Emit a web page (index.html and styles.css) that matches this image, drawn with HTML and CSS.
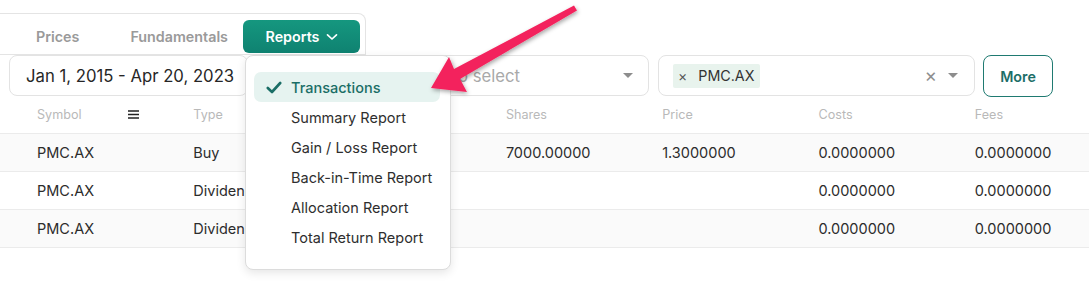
FILE: index.html
```html
<!DOCTYPE html>
<html>
<head>
<meta charset="utf-8">
<link rel="stylesheet" href="styles.css">
</head>
<body>
<div class="page">
  <div class="tabbar">
    <div class="tab tab-prices">Prices</div>
    <div class="tab tab-fund">Fundamentals</div>
    <div class="tab tab-reports">Reports
      <svg class="chev" width="12" height="8" viewBox="0 0 12 8"><path d="M1.5 1.8 L6 6 L10.5 1.8" fill="none" stroke="#fff" stroke-width="1.7" stroke-linecap="round" stroke-linejoin="round"/></svg>
    </div>
  </div>

  <div class="filters">
    <div class="box date-box">Jan 1, 2015 - Apr 20, 2023</div>
    <div class="box type-box">
      <span class="placeholder">Type to select</span>
      <span class="caret"></span>
    </div>
    <div class="box sym-box">
      <span class="tag"><span class="tag-x">×</span>PMC.AX</span>
      <span class="spacer"></span>
      <span class="clear">×</span>
      <span class="caret"></span>
    </div>
    <div class="more">More</div>
  </div>

  <div class="table">
    <div class="row head">
      <div class="cell sym-head">Symbol
        <svg class="ham" width="11" height="9" viewBox="0 0 11 9"><path d="M0 1h11M0 4.5h11M0 8h11" stroke="#222" stroke-width="1.3"/></svg>
      </div>
      <div class="cell">Type</div>
      <div class="cell">Date</div>
      <div class="cell">Shares</div>
      <div class="cell">Price</div>
      <div class="cell">Costs</div>
      <div class="cell">Fees</div>
    </div>
    <div class="row odd">
      <div class="cell">PMC.AX</div>
      <div class="cell">Buy</div>
      <div class="cell">Jan 12, 2021</div>
      <div class="cell">7000.00000</div>
      <div class="cell">1.3000000</div>
      <div class="cell">0.0000000</div>
      <div class="cell">0.0000000</div>
    </div>
    <div class="row">
      <div class="cell">PMC.AX</div>
      <div class="cell">Dividend</div>
      <div class="cell">Mar 3, 2022</div>
      <div class="cell"></div>
      <div class="cell"></div>
      <div class="cell">0.0000000</div>
      <div class="cell">0.0000000</div>
    </div>
    <div class="row odd">
      <div class="cell">PMC.AX</div>
      <div class="cell">Dividend</div>
      <div class="cell">Sep 9, 2022</div>
      <div class="cell"></div>
      <div class="cell"></div>
      <div class="cell">0.0000000</div>
      <div class="cell">0.0000000</div>
    </div>
  </div>

  <div class="menu">
    <div class="item active">
      <svg class="check" width="16" height="13" viewBox="0 0 16 13"><path d="M1.8 7 L6 11 L14.2 2" fill="none" stroke="#1a6e66" stroke-width="2.6" stroke-linecap="round" stroke-linejoin="round"/></svg>
      <span>Transactions</span>
    </div>
    <div class="item">Summary Report</div>
    <div class="item">Gain / Loss Report</div>
    <div class="item">Back-in-Time Report</div>
    <div class="item">Allocation Report</div>
    <div class="item">Total Return Report</div>
  </div>

  <svg class="arrow" width="1089" height="306" viewBox="0 0 1089 306">
    <defs>
      <filter id="sh" x="-20%" y="-20%" width="140%" height="140%">
        <feDropShadow dx="1" dy="2" stdDeviation="2" flood-color="#000" flood-opacity="0.35"/>
      </filter>
    </defs>
    <polygon points="431,88 449,57 454,69 574,5.5 577,10.5 460,79 467,92" fill="#f3245d" filter="url(#sh)"/>
  </svg>
</div>
</body>
</html>
```

FILE: styles.css
```css
* { box-sizing: border-box; }
html, body { margin: 0; padding: 0; background: #fff; }
body {
  font-family: Inter, "Noto Sans", "Liberation Sans", sans-serif;
  color: #2b2b2b;
  width: 1089px;
  height: 306px;
  overflow: hidden;
}
.page { position: relative; width: 1089px; height: 306px; padding-top: 13px; }

.tabbar {
  width: 366px;
  height: 42px;
  border: 1px solid #e4e4e4;
  border-left: none;
  border-radius: 0 8px 0 0;
  display: flex;
  align-items: flex-end;
  padding-bottom: 1px;
}
.tab {
  height: 33px;
  display: flex;
  align-items: center;
  font-size: 14.3px;
  font-weight: 600;
  color: #9a9a9a;
}
.tab-prices { padding: 0 24.5px 0 36px; }
.tab-fund { padding: 0 15.5px 0 26.5px; }
.tab-reports {
  width: 117px;
  padding-left: 22px;
  border-radius: 6px;
  background: linear-gradient(180deg, #15977f 0%, #0f8271 100%);
  color: #fff;
}
.chev { margin-left: 7px; margin-top: 1px; }

.filters {
  display: flex;
  gap: 9px;
  padding-left: 9px;
  height: 41px;
}
.box {
  height: 41px;
  border: 1px solid #e3e3e3;
  border-radius: 8px;
  display: flex;
  align-items: center;
}
.date-box {
  width: 239px;
  padding-left: 16px;
  font-size: 16.7px;
  color: #262626;
}
.type-box {
  width: 392px;
  padding-left: 151px;
  padding-right: 15px;
  font-size: 16.7px;
}
.placeholder { color: #a9a9a9; flex: 1; }
.caret {
  width: 0; height: 0;
  border-left: 5px solid transparent;
  border-right: 5px solid transparent;
  border-top: 5px solid #8d8d8d;
}
.sym-box {
  width: 317px;
  padding-left: 14px;
  padding-right: 16px;
}
.tag {
  height: 24px;
  background: #e8f3ed;
  border-radius: 2px;
  display: flex;
  align-items: center;
  padding: 0 5px 0 5px;
  font-size: 14.3px;
  color: #333;
}
.tag-x { font-size: 14px; color: #555; margin-right: 11px; }
.spacer { flex: 1; }
.clear { font-size: 19px; color: #8f8f8f; margin-right: 11px; line-height: 1; }
.more {
  width: 70px;
  height: 42px;
  margin-left: -1px;
  border: 1.5px solid #1f7a71;
  border-radius: 8px;
  display: flex;
  align-items: center;
  justify-content: center;
  font-size: 14.3px;
  font-weight: 600;
  color: #1d6e67;
}

.row {
  display: grid;
  grid-template-columns: repeat(7, 156.3px);
  padding-left: 37px;
  height: 38px;
  align-items: center;
  border-bottom: 1px solid #ebebeb;
  font-size: 14.5px;
  color: #2c2c2c;
}
.row.head {
  height: 38px;
  font-size: 12.6px;
  color: #b9b9b9;
}
.row.odd { background: #fafafa; }
.cell { white-space: nowrap; overflow: hidden; }
.sym-head { display: flex; align-items: center; }
.ham { margin-left: 46px; }

.menu {
  position: absolute;
  left: 245px;
  top: 55px;
  width: 206px;
  height: 215px;
  background: #fff;
  border: 1px solid #dcdcdc;
  border-radius: 8px;
  box-shadow: 0 3px 10px rgba(0,0,0,0.10);
  padding: 16px 10px 16px 8px;
}
.item {
  height: 30px;
  display: flex;
  align-items: center;
  padding-left: 37px;
  font-size: 14.5px;
  color: #2e2e2e;
}
.item.active {
  background: #e6f3f0;
  border-radius: 7px;
  padding-left: 12px;
  color: #1a6e66;
  font-weight: 500;
}
.check { margin-right: 9px; }

.arrow { position: absolute; left: 0; top: 0; pointer-events: none; }
```
